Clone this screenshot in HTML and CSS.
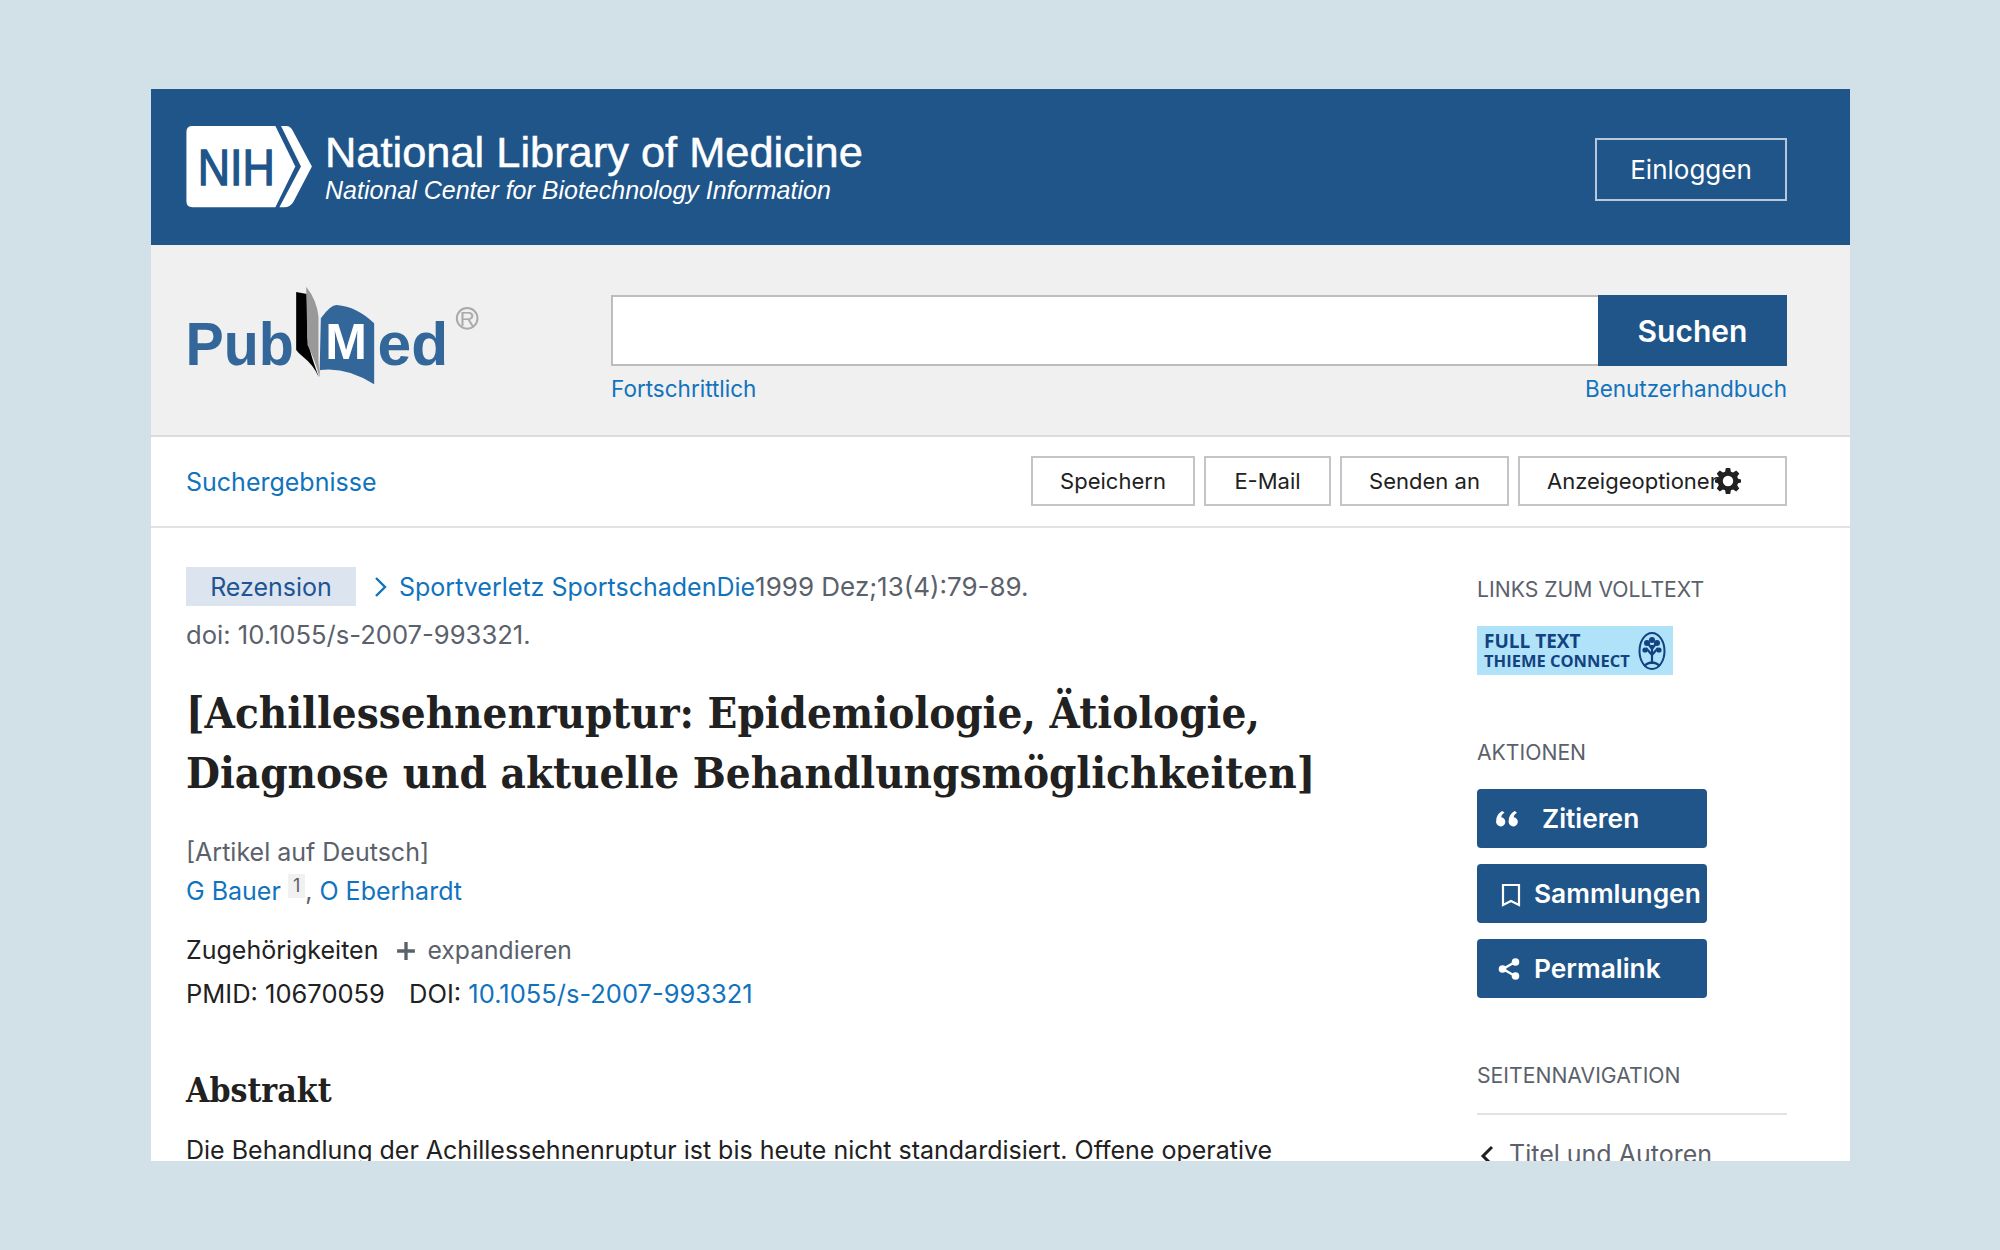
FILE: index.html
```html
<!DOCTYPE html>
<html lang="de">
<head>
  <meta charset="UTF-8" />
  <title>PubMed</title>
  <link rel="stylesheet" href="styles.css">
</head>
<body>
  <div class="frame">
    <header class="nih-bar">
      <svg class="nih-logo" viewBox="50 33 380 247" aria-label="NIH">
        <path fill="#fff" d="M68 33H318L378 155L318 278H68Q50 278 50 260V51Q50 33 68 33Z"/>
        <path fill="#fff" d="M335 33H350Q365 33 372 50L428 155L372 262Q362 278 345 278H330L395 155Z"/>
        <text x="84" y="210" font-size="150" textLength="232" lengthAdjust="spacingAndGlyphs" class="nih-mark">NIH</text>
      </svg>
      <div class="nih-names">
        <div class="nih-title">National Library of Medicine</div>
        <div class="nih-sub">National Center for Biotechnology Information</div>
      </div>
      <a class="login">Einloggen</a>
    </header>

    <section class="search-bar">
      <svg class="pubmed-logo" viewBox="48 48 890 300" aria-label="PubMed">
        <text x="46" y="285" font-size="185" textLength="325" lengthAdjust="spacingAndGlyphs" class="pm-word">Pub</text>
        <path fill="#000" d="M378 66L410 72L412 205Q416 240 446 322Q430 285 400 262Q385 250 378 240Z"/>
        <path fill="#999" d="M408 50Q440 90 445 140V275L448 322Q435 270 412 225Z"/>
        <path fill="#336699" d="M452 145Q480 105 500 105Q560 110 612 160V343Q530 290 450 300L448 322Z"/>
        <text x="465" y="268" font-size="150" textLength="125" lengthAdjust="spacingAndGlyphs" class="pm-m">M</text>
        <text x="622" y="285" font-size="185" textLength="212" lengthAdjust="spacingAndGlyphs" class="pm-word">ed</text>
        <circle cx="891" cy="145" r="31" fill="none" stroke="#aaa" stroke-width="6"/>
        <text x="891" y="168" font-size="62" text-anchor="middle" class="pm-reg">R</text>
      </svg>
      <div class="search-col">
        <div class="search-form">
          <div class="search-input"></div>
          <button class="search-btn">Suchen</button>
        </div>
        <div class="search-links">
          <a>Fortschrittlich</a>
          <a>Benutzerhandbuch</a>
        </div>
      </div>
    </section>

    <nav class="tools">
      <a class="back">Suchergebnisse</a>
      <div class="tool-btns">
        <button class="tool tool-save">Speichern</button>
        <button class="tool tool-mail">E-Mail</button>
        <button class="tool tool-send">Senden an</button>
        <button class="tool tool-opts">
          <span>Anzeigeoptionen</span>
          <svg class="gear" viewBox="0 0 24 24"><path fill="#212121" fill-rule="evenodd" d="M10 0H14L14.7 3.4L16.7 4.2L19.6 2.3L22.4 5.1L20.5 8L21.3 10L24 10.6V13.4L21.3 14L20.5 16L22.4 18.9L19.6 21.7L16.7 19.8L14.7 20.6L14 24H10L9.3 20.6L7.3 19.8L4.4 21.7L1.6 18.9L3.5 16L2.7 14L0 13.4V10.6L2.7 10L3.5 8L1.6 5.1L4.4 2.3L7.3 4.2L9.3 3.4ZM12 7.2A4.8 4.8 0 1 0 12 16.8A4.8 4.8 0 1 0 12 7.2Z"/></svg>
        </button>
      </div>
    </nav>

    <div class="content">
      <main class="article">
        <div class="cite">
          <span class="badge">Rezension</span>
          <svg class="chevron" viewBox="0 0 14 22"><path d="M2 2L11 11L2 20" fill="none" stroke="#1173bd" stroke-width="2.4"/></svg>
          <a>Sportverletz SportschadenDie</a><span class="muted">1999 Dez;13(4):79-89.</span>
        </div>
        <div class="doi muted">doi: 10.1055/s-2007-993321.</div>
        <h1>[Achillessehnenruptur: Epidemiologie, Ätiologie,<br>Diagnose und aktuelle Behandlungsmöglichkeiten]</h1>
        <div class="lang muted">[Artikel auf Deutsch]</div>
        <div class="authors"><a>G Bauer</a> <sup>1</sup>, <a>O Eberhardt</a></div>
        <div class="affil">Zugehörigkeiten
          <svg class="plus" viewBox="0 0 18 18"><path d="M9 1V17M1 9H17" stroke="#5b616b" stroke-width="3"/></svg>
          <span class="expand">expandieren</span>
        </div>
        <div class="ids">PMID: 10670059 <span class="doi-label">DOI:</span> <a>10.1055/s-2007-993321</a></div>
        <h2>Abstrakt</h2>
        <p>Die Behandlung der Achillessehnenruptur ist bis heute nicht standardisiert. Offene operative</p>
      </main>

      <aside class="side">
        <h3>LINKS ZUM VOLLTEXT</h3>
        <div class="thieme">
          <div class="thieme-text">
            <div class="thieme-top">FULL TEXT</div>
            <div class="thieme-low">THIEME CONNECT</div>
          </div>
          <svg class="thieme-tree" viewBox="0 0 28 40">
            <ellipse cx="14" cy="20" rx="12.5" ry="18" fill="none" stroke="#12427f" stroke-width="2"/>
            <path d="M14 33V14M14 24L8 17M14 24L20 17M14 18L9 11M14 18L19 11M6 35Q14 28 22 35" fill="none" stroke="#12427f" stroke-width="2.2"/>
            <circle cx="9" cy="12" r="3" fill="#12427f"/><circle cx="19" cy="12" r="3" fill="#12427f"/><circle cx="14" cy="9" r="3" fill="#12427f"/><circle cx="7" cy="19" r="2.6" fill="#12427f"/><circle cx="21" cy="19" r="2.6" fill="#12427f"/>
          </svg>
        </div>

        <h3 class="actions-title">AKTIONEN</h3>
        <div class="actions">
          <button class="action action-cite">
            <svg class="ico-cite" viewBox="0 0 24 16"><path fill="#fff" d="M6 0L8.5 1.500Q5.500 3.500 5.200 6.200A4.600 4.600 0 1 1 .2 9.800Q.2 3.500 6 0ZM18.500 0L21 1.500Q18 3.500 17.700 6.200A4.600 4.600 0 1 1 12.700 9.800Q12.700 3.500 18.500 0Z"/></svg>
            Zitieren
          </button>
          <button class="action action-coll">
            <svg class="ico-mark" viewBox="0 0 20 24"><path d="M2 2H18V22L10 18L2 22Z" fill="none" stroke="#fff" stroke-width="2.2"/></svg>
            Sammlungen
          </button>
          <button class="action action-link">
            <svg class="ico-share" viewBox="0 0 22 22"><path d="M17 4L5 11L17 18" fill="none" stroke="#fff" stroke-width="2.4"/><circle cx="17.500" cy="4" r="3.800" fill="#fff"/><circle cx="4.500" cy="11" r="3.800" fill="#fff"/><circle cx="17.500" cy="18" r="3.800" fill="#fff"/></svg>
            Permalink
          </button>
        </div>

        <h3 class="nav-title">SEITENNAVIGATION</h3>
        <div class="page-nav">
          <svg class="nav-back" viewBox="0 0 14 22"><path d="M12 2L3 11L12 20" fill="none" stroke="#212121" stroke-width="3"/></svg>
          <span>Titel und Autoren</span>
        </div>
      </aside>
    </div>
  </div>
</body>
</html>
```
FILE: styles.css
```css
html, body {
  margin: 0;
  padding: 0;
  background: #d2e0e8;
}
body {
  font-family: 'Inter', 'Liberation Sans', sans-serif;
  font-size: 25px;
  color: #212121;
}
a { color: #1173bd; }
button {
  font-family: inherit;
  cursor: pointer;
}

.frame {
  width: 1699px;
  height: 1072px;
  margin: 89px 0 0 151px;
  background: #fff;
  overflow: hidden;
}

/* top bar */
.nih-bar {
  height: 156px;
  box-sizing: border-box;
  background: #20558a;
  display: flex;
  align-items: center;
  padding: 0 63px 0 35px;
  color: #fff;
}
.nih-logo {
  width: 127px;
  height: 82px;
  margin: -1px 12px 0 0;
}
.nih-mark {
  font-family: 'Liberation Sans', sans-serif;
  fill: #20558a;
  stroke: #20558a;
  stroke-width: 4px;
}
.nih-names {
  flex: 1;
  margin-top: 1px;
  font-family: 'Liberation Sans', sans-serif;
}
.nih-title {
  font-size: 43.4px;
  line-height: 46px;
  -webkit-text-stroke: 0.5px #fff;
}
.nih-sub {
  font-size: 25px;
  line-height: 31px;
  font-style: italic;
}
.login {
  width: 192px;
  height: 63px;
  margin-top: 4px;
  box-sizing: border-box;
  border: 2px solid #b6c8da;
  display: flex;
  align-items: center;
  justify-content: center;
  color: #fff;
  font-size: 26px;
}

/* search */
.search-bar {
  height: 192px;
  box-sizing: border-box;
  background: #f0f0f0;
  border-bottom: 2px solid #dcdcdc;
  display: grid;
  grid-template-columns: 425px 1fr;
  padding: 41px 63px 0 35px;
}
.pubmed-logo {
  width: 297px;
  height: 100px;
}
.pm-word {
  font-family: 'Liberation Sans', sans-serif;
  font-weight: 700;
  fill: #336699;
}
.pm-m {
  font-family: 'Liberation Sans', sans-serif;
  font-weight: 700;
  fill: #fff;
}
.pm-reg {
  font-family: 'Liberation Sans', sans-serif;
  fill: #aaa;
}
.search-col { margin-top: 9px; }
.search-form {
  display: flex;
  height: 71px;
}
.search-input {
  flex: 1;
  background: #fff;
  border: 2px solid #bdbdbd;
  border-right: 0;
}
.search-btn {
  width: 189px;
  background: #20558a;
  border: 0;
  color: #fff;
  font-size: 30px;
  font-weight: 600;
}
.search-links {
  display: flex;
  justify-content: space-between;
  margin-top: 9px;
  font-size: 22.5px;
  line-height: 28px;
}

/* tools row */
.tools {
  height: 91px;
  box-sizing: border-box;
  border-bottom: 2px solid #e2e2e2;
  display: flex;
  align-items: center;
  justify-content: space-between;
  padding: 0 63px 2px 35px;
}
.back {
  font-size: 25px;
  margin-top: 3px;
}
.tool-btns {
  display: flex;
  gap: 9px;
}
.tool {
  height: 50px;
  box-sizing: border-box;
  background: #fff;
  border: 2px solid #c4c4c8;
  color: #212121;
  font-size: 22px;
  padding: 1px 0 0;
}
.tool-save { width: 164px; }
.tool-mail { width: 127px; }
.tool-send { width: 169px; }
.tool-opts {
  width: 269px;
  display: flex;
  align-items: center;
  padding-left: 27px;
  white-space: nowrap;
}
.gear {
  width: 26px;
  height: 26px;
  margin-left: -8px;
  flex: none;
}

/* main columns */
.content {
  display: grid;
  grid-template-columns: 1291px 310px;
  padding-left: 35px;
}
.article { padding-top: 39px; }
.muted { color: #5b616b; }
.cite {
  display: flex;
  align-items: center;
  height: 39px;
  font-size: 25px;
}
.cite .muted { font-size: 26px; }
.badge {
  width: 170px;
  height: 39px;
  background: #dce4ef;
  color: #205493;
  display: flex;
  align-items: center;
  justify-content: center;
  margin-right: 18px;
}
.chevron {
  width: 14px;
  height: 22px;
  margin-right: 11px;
}
.doi {
  font-size: 25.6px;
  line-height: 34px;
  margin-top: 12px;
}
h1 {
  font-family: 'DejaVu Serif Condensed', 'DejaVu Serif', serif;
  font-weight: 700;
  font-size: 43.5px;
  line-height: 60px;
  margin: 31px 0 0;
  color: #212121;
  white-space: nowrap;
}
.lang {
  font-size: 25px;
  line-height: 34px;
  margin-top: 32px;
}
.authors {
  font-size: 25px;
  line-height: 40px;
  margin-top: 2px;
  color: #5b616b;
}
.authors sup {
  display: inline-block;
  background: #f1f1f1;
  font-size: 18px;
  line-height: 24px;
  padding: 0 5px;
  vertical-align: 8px;
}
.affil {
  display: flex;
  align-items: center;
  font-size: 25px;
  line-height: 34px;
  margin-top: 22px;
}
.plus {
  width: 20px;
  height: 20px;
  margin: 2px 11px 0 18px;
}
.expand {
  color: #5b616b;
  font-size: 24.7px;
}
.ids {
  font-size: 25.5px;
  line-height: 34px;
  margin-top: 10px;
}
.doi-label { margin-left: 17px; }
h2 {
  font-family: 'DejaVu Serif Condensed', 'DejaVu Serif', serif;
  font-size: 33.5px;
  line-height: 42px;
  margin: 59px 0 0;
}
.article p {
  margin: 20px 0 0;
  font-size: 25px;
  line-height: 36px;
  white-space: nowrap;
}

/* sidebar */
.side { padding-top: 46px; }
.side h3 {
  font-size: 21.2px;
  font-weight: 400;
  line-height: 30px;
  color: #5b616b;
  margin: 0;
}
.thieme {
  width: 196px;
  height: 49px;
  margin-top: 22px;
  box-sizing: border-box;
  padding: 0 7px;
  background: #b0e3fa;
  color: #12427f;
  display: flex;
  align-items: center;
  justify-content: space-between;
  font-family: 'Open Sans', sans-serif;
  font-weight: 700;
}
.thieme-top {
  font-size: 19px;
  line-height: 20px;
}
.thieme-low {
  font-size: 16.5px;
  line-height: 20px;
  white-space: nowrap;
}
.thieme-tree {
  width: 28px;
  height: 40px;
}
.side h3.actions-title { margin-top: 62px; }
.actions {
  display: flex;
  flex-direction: column;
  gap: 16px;
  margin-top: 22px;
}
.action {
  width: 230px;
  height: 59px;
  background: #20558a;
  border: 0;
  border-radius: 4px;
  color: #fff;
  font-size: 26.300px;
  font-weight: 600;
  display: flex;
  align-items: center;
  padding: 0;
  white-space: nowrap;
}
.ico-cite {
  width: 24px;
  height: 16px;
  margin: 0 22px 0 19px;
}
.ico-mark {
  width: 20px;
  height: 24px;
  margin: 2px 13px 0 24px;
}
.ico-share {
  width: 22px;
  height: 22px;
  margin: 0 14px 0 21px;
}
.side h3.nav-title { margin-top: 62px; }
.page-nav {
  border-top: 2px solid #e2e2e2;
  margin-top: 23px;
  padding-top: 22px;
  display: flex;
  align-items: center;
  font-size: 25px;
  line-height: 34px;
  color: #5b616b;
}
.nav-back {
  width: 14px;
  height: 22px;
  margin: 4px 15px 0 3px;
}
```
